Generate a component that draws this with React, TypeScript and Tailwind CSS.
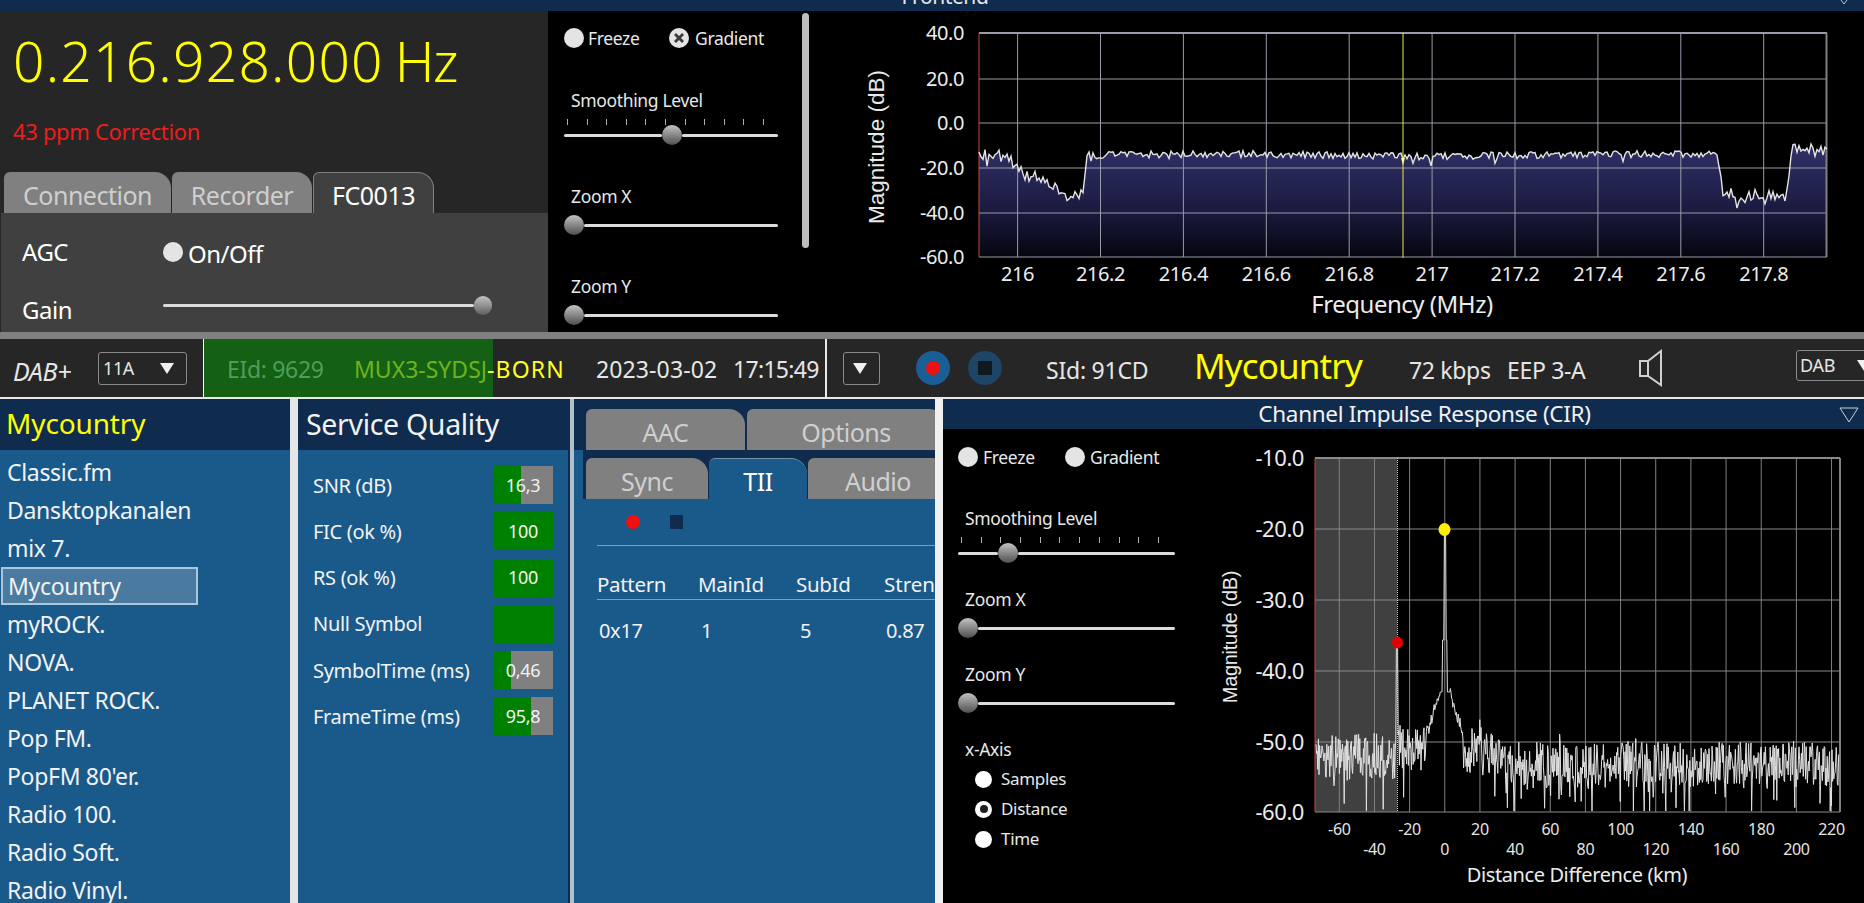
const stations = [
  "Classic.fm",
  "Dansktopkanalen",
  "mix 7.",
  "Mycountry",
  "myROCK.",
  "NOVA.",
  "PLANET ROCK.",
  "Pop FM.",
  "PopFM 80'er.",
  "Radio 100.",
  "Radio Soft.",
  "Radio Vinyl.",
];

const quality = [
  { label: "SNR (dB)", value: "16,3", fill: 47 },
  { label: "FIC (ok %)", value: "100", fill: 100 },
  { label: "RS (ok %)", value: "100", fill: 100 },
  { label: "Null Symbol", value: "", fill: 100 },
  { label: "SymbolTime (ms)", value: "0,46", fill: 30 },
  { label: "FrameTime (ms)", value: "95,8", fill: 64 },
];

function makeRandom(seed: number) {
  let s = seed;
  return () => {
    s = (s * 1664525 + 1013904223) % 4294967296;
    return s / 4294967296;
  };
}

function spectrumBase(x: number) {
  if (x < 1000) return 155;
  if (x < 1072) return 158 + ((x - 1000) / 72) * 38 + Math.sin(x / 6) * 3;
  if (x < 1083) return 198 - ((x - 1072) / 11) * 6;
  if (x < 1087) return 192 - ((x - 1083) / 4) * 38;
  if (x < 1718) return 155 + Math.sin(x / 70);
  if (x < 1723) return 160 + ((x - 1718) / 5) * 33;
  if (x < 1786) return 194 + ((x - 1723) / 63) * 3;
  if (x < 1793) return 193 - ((x - 1786) / 7) * 47;
  return 147 + ((x - 1793) / 34) * 5;
}

function spectrumPath() {
  const rnd = makeRandom(7);
  const pts: string[] = [];
  for (let x = 979; x <= 1827; x += 2) {
    const noisy = x < 1083 || (x > 1723 && x < 1786) || x > 1793;
    let y = spectrumBase(x) + (rnd() - 0.5) * (noisy ? 12 : 7);
    if (rnd() > 0.92) y += rnd() * (noisy ? 10 : 7);
    pts.push(`${x} ${y.toFixed(1)}`);
  }
  return pts;
}

function cirPath() {
  const rnd = makeRandom(21);
  const pts: string[] = [];
  for (let x = 1316; x <= 1839; x += 0.6) {
    let base = 765;
    if (x < 1397) base = 756;
    else if (x < 1430) base = 748;
    else if (x < 1480) base = 746 + ((x - 1430) / 50) * 6;
    else if (x < 1530) base = 752 + ((x - 1480) / 50) * 12;
    let y = base + (rnd() - 0.5) * 46;
    if (rnd() > 0.88) y += rnd() * 44;
    if (rnd() > 0.95) y -= rnd() * 16;
    if (x >= 1396 && x <= 1398.2) y = x < 1397.6 ? 642 : 735;
    const d = Math.abs(x - 1444.8);
    if (d < 18) {
      const peak = d < 1 ? 532 : d < 2.5 ? 640 : d < 5 ? 692 : 692 + (d - 5) * 3.4;
      y = Math.min(y, peak + (d > 5 ? (rnd() - 0.5) * 14 : 0));
    }
    pts.push(`${x.toFixed(1)} ${Math.min(y, 811).toFixed(1)}`);
  }
  return pts.join(" L");
}

function Round({ mark }: { mark?: boolean }) {
  return (
    <span className="w-[20px] h-[20px] rounded-full bg-[#e4e4e4] shrink-0 flex items-center justify-center">
      {mark && (
        <svg width="14" height="14" viewBox="0 0 14 14">
          <path d="M3 3 L11 11 M11 3 L3 11" stroke="#3a3a3a" strokeWidth="2.8" />
        </svg>
      )}
    </span>
  );
}

function Thumb() {
  return <span className="w-[20px] h-[20px] rounded-full shrink-0 bg-linear-to-b from-[#c4c4c4] to-[#505050]" />;
}

function Slider({ before, after }: { before: number; after: number }) {
  return (
    <div className="flex items-center h-[20px]">
      {before > 0 && <span className="h-[3px] bg-[#dcdcdc] rounded-full" style={{ width: before }} />}
      <Thumb />
      <span className="h-[3px] bg-[#dcdcdc] rounded-full" style={{ width: after }} />
    </div>
  );
}

function Ticks({ width }: { width: number }) {
  return (
    <div className="flex justify-between h-[6px] ml-[3px]" style={{ width }}>
      {Array.from({ length: 11 }).map((_, i) => (
        <span key={i} className="w-[1px] h-full bg-[#b0b0b0]" />
      ))}
    </div>
  );
}

function Tab({ label, active, width, dark }: { label: string; active?: boolean; width: number; dark?: boolean }) {
  let cls =
    "h-full shrink-0 pt-[6px] rounded-tl-[6px] rounded-tr-[16px] flex items-center justify-center text-[25px] tracking-[-0.02em] ";
  if (active) {
    cls += dark
      ? "bg-[#1a5a8a] border-t border-[#6f93ae] text-white"
      : "bg-[#404040] border-t border-x border-[#808080] text-white";
  } else {
    cls += "bg-[#808080] text-[#cfcfcf]";
  }
  return (
    <div className={cls} style={{ width }}>
      {label}
    </div>
  );
}

function SpectrumChart() {
  const pts = spectrumPath();
  const line = "M" + pts.join(" L");
  const area = line + " L1827 257 L979 257 Z";
  const xs = ["216", "216.2", "216.4", "216.6", "216.8", "217", "217.2", "217.4", "217.6", "217.8"];
  const ys = ["40.0", "20.0", "0.0", "-20.0", "-40.0", "-60.0"];
  const yPos = [33, 79, 123, 168, 213, 257];
  return (
    <svg width="1049" height="321" viewBox="815 11 1049 321" className="block shrink-0">
      <defs>
        <linearGradient id="specFill" x1="0" y1="143" x2="0" y2="257" gradientUnits="userSpaceOnUse">
          <stop offset="0" stopColor="#31316a" />
          <stop offset="0.6" stopColor="#1a1a3e" />
          <stop offset="1" stopColor="#050510" />
        </linearGradient>
      </defs>
      <path d={area} fill="url(#specFill)" />
      {xs.map((_, i) => (
        <line key={i} x1={1017.6 + i * 82.9} x2={1017.6 + i * 82.9} y1="33" y2="257" stroke="#9a9aa8" />
      ))}
      {yPos.map((y) => (
        <line key={y} x1="979" x2="1827" y1={y} y2={y} stroke="#9a9aa8" strokeWidth={y === 33 ? 2 : 1} />
      ))}
      <line x1="1826.5" x2="1826.5" y1="33" y2="257" stroke="#808080" strokeWidth="2" />
      <line x1="979" x2="979" y1="33" y2="257" stroke="#c24a40" />
      <path d={line} fill="none" stroke="#e4e4e4" strokeWidth="1.4" />
      <line x1="1403" x2="1403" y1="33" y2="258" stroke="#e8e850" />
      <path d="M1401 158 L1405 158 L1403 165 Z" fill="#ffff80" />
      {ys.map((t, i) => (
        <text key={t} x="964" y={yPos[i] + 7} textAnchor="end" className="fill-[#ececec] text-[20px] tracking-[-0.02em]">
          {t}
        </text>
      ))}
      {xs.map((t, i) => (
        <text key={t} x={1017.6 + i * 82.9} y="281" textAnchor="middle" className="fill-[#ececec] text-[20px] tracking-[-0.02em]">
          {t}
        </text>
      ))}
      <text x="1402" y="313" textAnchor="middle" className="fill-[#ececec] text-[24px] tracking-[-0.02em]">
        Frequency (MHz)
      </text>
      <text
        transform="translate(884 147) rotate(-90)"
        textAnchor="middle"
        className="fill-[#e8e8e8] text-[22.5px] font-['Liberation_Sans']"
      >
        Magnitude (dB)
      </text>
    </svg>
  );
}

function CirChart() {
  const xLabels = [-60, -40, -20, 0, 20, 40, 60, 80, 100, 120, 140, 160, 180, 200, 220];
  const ys = ["-10.0", "-20.0", "-30.0", "-40.0", "-50.0", "-60.0"];
  const yPos = [458, 529, 600, 671, 742, 812];
  const xAt = (i: number) => 1339.3 + i * 35.16;
  return (
    <svg width="674" height="474" viewBox="1190 429 674 474" className="block shrink-0">
      <rect x="1315" y="458" width="82" height="354" fill="#404040" />
      {xLabels.map((_, i) => (
        <line key={i} x1={xAt(i)} x2={xAt(i)} y1="458" y2="812" stroke="#808080" />
      ))}
      {yPos.map((y) => (
        <line key={y} x1="1315" x2="1840" y1={y} y2={y} stroke="#8a8a8a" strokeWidth={y === 458 ? 2 : 1} />
      ))}
      <line x1="1840" x2="1840" y1="458" y2="812" stroke="#808080" strokeWidth="2" />
      <line x1="1315" x2="1315" y1="458" y2="812" stroke="#c24a40" />
      <path d={"M" + cirPath()} fill="none" stroke="#e0e0e0" strokeWidth="1" />
      <line x1="1397.5" x2="1397.5" y1="458" y2="812" stroke="#e8e850" strokeDasharray="1 1" />
      <ellipse cx="1444.5" cy="529.5" rx="6" ry="6.5" fill="#ffee00" />
      <ellipse cx="1397.5" cy="642.5" rx="5.5" ry="6" fill="#e00000" />
      {ys.map((t, i) => (
        <text key={t} x="1304" y={yPos[i] + 8} textAnchor="end" className="fill-[#ececec] text-[22px] tracking-[-0.02em]">
          {t}
        </text>
      ))}
      {xLabels.map((t, i) => (
        <text
          key={t}
          x={xAt(i)}
          y={i % 2 === 0 ? 835 : 855}
          textAnchor="middle"
          className="fill-[#e4e4e4] text-[16px] tracking-[-0.02em]"
        >
          {t}
        </text>
      ))}
      <text x="1577" y="882" textAnchor="middle" className="fill-[#ececec] text-[20px] tracking-[-0.02em]">
        Distance Difference (km)
      </text>
      <text
        transform="translate(1237 637) rotate(-90)"
        textAnchor="middle"
        className="fill-[#e8e8e8] text-[20px] font-['Liberation_Sans']"
      >
        Magnitude (dB)
      </text>
    </svg>
  );
}

function SmallCombo({ label, width }: { label?: string; width: number }) {
  return (
    <div
      className="h-[33px] shrink-0 border border-[#8a8a8a] rounded-[3px] flex items-center justify-between pl-[4px] pr-[12px] text-[18px] text-[#e4e4e4] tracking-[-0.02em]"
      style={{ width }}
    >
      <span>{label}</span>
      <svg width="14" height="11" viewBox="0 0 14 11" className="shrink-0">
        <path d="M0 0 H14 L7 11 Z" fill="#f0f0f0" />
      </svg>
    </div>
  );
}

export default function App() {
  return (
    <div className="w-[1864px] h-[903px] overflow-hidden bg-black flex flex-col text-white font-['Noto_Sans',sans-serif]">
      <div className="h-[11px] shrink-0 bg-[#0f2b4d] overflow-hidden relative flex justify-center pl-[26px]">
        <span className="text-[21px] leading-[20px] -mt-[14px] text-[#e8e8e8] tracking-[-0.02em]">Frontend</span>
        <svg width="12" height="4" viewBox="0 0 12 4" className="absolute right-[12px] top-0">
          <path d="M1 0 L4 4 L7 0" fill="none" stroke="#b8c4d0" />
        </svg>
      </div>

      <div className="h-[321px] shrink-0 flex">
        <div className="w-[548px] shrink-0 bg-[#262626] flex flex-col">
          <div className="h-[101px] flex items-center pl-[13px] text-[yellow] text-[55px] font-light">
            <span className="tracking-[0.023em]">0.216.928.000</span>
            <span className="ml-[11px] tracking-[-0.03em]">Hz</span>
          </div>
          <div className="h-[38px] flex items-center pl-[13px] text-[22px] text-[#ee1c1c] tracking-[-0.015em]">
            43 ppm Correction
          </div>
          <div className="h-[41px] mt-[22px] flex gap-[1px] pl-[4px] shrink-0">
            <Tab label="Connection" width={167} />
            <Tab label="Recorder" width={140} />
            <Tab label="FC0013" width={121} active />
          </div>
          <div className="h-[119px] bg-[#404040] ml-[1px] pt-[19px] flex flex-col gap-[18px] text-[24px] tracking-[-0.02em]">
            <div className="h-[40px] flex items-center">
              <span className="w-[162px] pl-[21px]">AGC</span>
              <Round />
              <span className="ml-[5px] mt-[3px]">On/Off</span>
            </div>
            <div className="h-[40px] flex items-center">
              <span className="w-[162px] pl-[21px]">Gain</span>
              <span className="h-[3px] w-[311px] bg-[#dcdcdc] rounded-full -mt-[10px]" />
              <span className="w-[18px] h-[19px] -mt-[10px] rounded-full bg-linear-to-b from-[#c4c4c4] to-[#606060]" />
            </div>
          </div>
        </div>

        <div className="w-[267px] shrink-0 flex text-[17.5px] tracking-[-0.02em] text-[#e8e8e8]">
          <div className="w-[254px] pl-[16px] shrink-0">
            <div className="mt-[17px] h-[20px] flex items-center">
              <Round />
              <span className="ml-[4px] w-[81px]">Freeze</span>
              <Round mark />
              <span className="ml-[6px]">Gradient</span>
            </div>
            <div className="mt-[42px] h-[20px] leading-[20px] pl-[7px]">Smoothing Level</div>
            <div className="mt-[9px]">
              <Ticks width={197} />
            </div>
            <Slider before={98} after={96} />
            <div className="mt-[41px] h-[20px] leading-[20px] pl-[7px]">Zoom X</div>
            <div className="mt-[9px]">
              <Slider before={0} after={194} />
            </div>
            <div className="mt-[41px] h-[20px] leading-[20px] pl-[7px]">Zoom Y</div>
            <div className="mt-[9px]">
              <Slider before={0} after={194} />
            </div>
          </div>
          <div className="w-[7px] h-[235px] mt-[2px] rounded-full bg-[#bdbdbd]" />
        </div>

        <SpectrumChart />
      </div>

      <div className="h-[7px] shrink-0 bg-[#808080]" />

      <div className="h-[58px] shrink-0 bg-[#262626] flex items-center text-[#e6e6e6] tracking-[-0.02em]">
        <span className="w-[98px] shrink-0 pl-[13px] italic text-[25px] mt-[8px]">DAB+</span>
        <SmallCombo label="11A" width={89} />
        <span className="w-[16px] shrink-0" />
        <div className="relative w-[622px] h-full shrink-0 flex items-center border-l border-white text-[23px] pt-[3px]">
          <div className="absolute left-0 top-0 bottom-0 w-[289px] bg-[#146014]" />
          <span className="relative w-[150px] pl-[23px] text-[#4f9e5a] shrink-0">EId: 9629</span>
          <span className="relative w-[242px] shrink-0 tracking-normal">
            <span className="text-[#6fb31c]">MUX3-SYDSJ</span>
            <span className="text-[#ffff22] tracking-[0.05em]">-BORN</span>
          </span>
          <span className="relative w-[137px] shrink-0 tracking-[0.005em]">2023-03-02</span>
          <span className="relative shrink-0 tracking-[-0.03em]">17:15:49</span>
        </div>
        <span className="w-[2px] h-full bg-[#e8e8e8] shrink-0" />
        <span className="w-[16px] shrink-0" />
        <SmallCombo width={37} />
        <div className="ml-[36px] w-[34px] h-[34px] rounded-full bg-[#1a5e96] flex items-center justify-center shrink-0">
          <span className="w-[14px] h-[14px] rounded-full bg-[#f01010]" />
        </div>
        <div className="ml-[18px] w-[34px] h-[34px] rounded-full bg-[#1e4466] flex items-center justify-center shrink-0">
          <span className="w-[14px] h-[14px] bg-[#101820]" />
        </div>
        <span className="ml-[44px] w-[148px] shrink-0 text-[23px] mt-[4px] tracking-[-0.01em]">SId: 91CD</span>
        <span className="w-[215px] shrink-0 text-[35px] text-[yellow] tracking-[-0.025em] -mt-[3px]">Mycountry</span>
        <span className="w-[98px] shrink-0 text-[23px] mt-[4px]">72 kbps</span>
        <span className="w-[132px] shrink-0 text-[23px] mt-[4px]">EEP 3-A</span>
        <svg width="24" height="38" viewBox="0 0 24 38" className="shrink-0">
          <path d="M1 12 H9 L22 2 V36 L9 27 H1 Z M9 12 V27" fill="none" stroke="#cfcfcf" strokeWidth="2" />
        </svg>
        <div className="ml-[133px] w-[80px] h-[31px] shrink-0 border border-[#8a8a8a] rounded-[3px] flex items-center pl-[3px] text-[18px] -mt-[5px]">
          <span className="w-[57px] shrink-0">DAB</span>
          <svg width="14" height="11" viewBox="0 0 14 11" className="shrink-0">
            <path d="M0 0 H14 L7 11 Z" fill="#f0f0f0" />
          </svg>
        </div>
      </div>

      <div className="h-[2px] shrink-0 bg-[#e8e8e8]" />

      <div className="flex-1 flex min-h-0 text-[#f2f2f2] tracking-[-0.02em]">
        <div className="w-[290px] shrink-0 bg-[#1a5a8a] flex flex-col">
          <div className="h-[51px] shrink-0 bg-[#0f2b4d] flex items-center pl-[6px] pb-[3px] text-[28px] tracking-[-0.005em] text-[yellow]">
            Mycountry
          </div>
          <div className="pt-[3px] flex flex-col">
            {stations.map((s) =>
              s === "Mycountry" ? (
                <div
                  key={s}
                  className="h-[38px] w-[197px] ml-[1px] shrink-0 flex items-center pl-[5px] text-[23px] bg-[#4a7a9f] border-2 border-[#a9c6da]"
                >
                  {s}
                </div>
              ) : (
                <div key={s} className="h-[38px] shrink-0 flex items-center pl-[7px] text-[23px]">
                  {s}
                </div>
              )
            )}
          </div>
        </div>

        <div className="w-[8px] shrink-0 bg-[#e6e6e6]" />

        <div className="w-[272px] shrink-0 bg-[#1a5a8a] border-r-2 border-[#0f2b4d] flex flex-col">
          <div className="h-[51px] shrink-0 bg-[#0f2b4d] flex items-center pl-[8px] pb-[1px] text-[28.5px]">
            Service Quality
          </div>
          <div className="pt-[16px] flex flex-col gap-[8.3px]">
            {quality.map((q) => (
              <div key={q.label} className="h-[38px] flex items-center text-[20px]">
                <span className="w-[195px] pl-[15px] pt-[1px] shrink-0">{q.label}</span>
                <div className="relative w-[60px] h-full bg-[#808080] flex items-center justify-center text-[18px]">
                  <span className="absolute left-0 top-0 bottom-0 bg-[#008000]" style={{ width: `${q.fill}%` }} />
                  <span className="relative">{q.value}</span>
                </div>
              </div>
            ))}
          </div>
        </div>

        <div className="w-[4px] shrink-0 bg-[#b4bfcc]" />

        <div className="w-[361px] shrink-0 bg-[#1a5a8a] flex flex-col overflow-hidden">
          <div className="h-[51px] shrink-0 bg-[#0f2b4d] flex flex-col justify-end pl-[12px]">
            <div className="h-[41px] flex gap-[2px]">
              <Tab label="AAC" width={159} />
              <Tab label="Options" width={198} />
            </div>
          </div>
          <div className="h-[49px] shrink-0 flex flex-col ml-[9px] bg-[#0f2b4d] pl-[3px] pt-[8px]">
            <div className="h-[41px] flex gap-[1px]">
              <Tab label="Sync" width={122} />
              <Tab label="TII" width={98} active dark />
              <Tab label="Audio" width={140} />
            </div>
          </div>
          <div className="flex items-center h-[46px] pl-[52px] shrink-0">
            <span className="w-[14px] h-[14px] rounded-full bg-[#f01010]" />
            <span className="ml-[30px] w-[13px] h-[14px] bg-[#0f2b4d]" />
          </div>
          <div className="h-[1px] ml-[23px] bg-[#7c9fba] shrink-0" />
          <div className="grid grid-cols-[101px_98px_88px_100px] pl-[23px] mt-[23px] text-[20.5px] h-[30px] items-center whitespace-nowrap shrink-0">
            <span>Pattern</span>
            <span>MainId</span>
            <span>SubId</span>
            <span className="tracking-normal">Strength</span>
          </div>
          <div className="h-[1px] ml-[23px] bg-[#7c9fba] shrink-0" />
          <div className="grid grid-cols-[101px_98px_88px_100px] pl-[25px] mt-[16px] text-[20px] h-[30px] items-center shrink-0">
            <span>0x17</span>
            <span className="pl-[1px]">1</span>
            <span className="pl-[2px]">5</span>
            <span>0.87</span>
          </div>
        </div>

        <div className="w-[8px] shrink-0 bg-[#f0f0f0]" />

        <div className="w-[921px] shrink-0 flex flex-col">
          <div className="h-[30px] shrink-0 bg-[#0f2b4d] relative flex items-center justify-center pl-[42px] text-[22.5px]">
            Channel Impulse Response (CIR)
            <svg width="20" height="16" viewBox="0 0 20 16" className="absolute right-[5px] top-[8px]">
              <path d="M1 1 H19 L10 15 Z" fill="none" stroke="#c8d2dc" />
            </svg>
          </div>
          <div className="flex-1 flex min-h-0">
            <div className="w-[247px] shrink-0 pl-[15px] text-[17.5px] text-[#e8e8e8]">
              <div className="mt-[18px] h-[20px] flex items-center">
                <Round />
                <span className="ml-[5px] w-[82px]">Freeze</span>
                <Round />
                <span className="ml-[5px]">Gradient</span>
              </div>
              <div className="mt-[41px] h-[20px] leading-[20px] pl-[7px]">Smoothing Level</div>
              <div className="mt-[9px]">
                <Ticks width={198} />
              </div>
              <Slider before={40} after={157} />
              <div className="mt-[26px] h-[20px] leading-[20px] pl-[7px]">Zoom X</div>
              <div className="mt-[9px]">
                <Slider before={0} after={197} />
              </div>
              <div className="mt-[26px] h-[20px] leading-[20px] pl-[7px]">Zoom Y</div>
              <div className="mt-[9px]">
                <Slider before={0} after={197} />
              </div>
              <div className="mt-[26px] h-[20px] leading-[20px] pl-[7px]">x-Axis</div>
              <div className="mt-[10px] pl-[17px] flex flex-col gap-[10px] text-[17px]">
                <div className="h-[20px] flex items-center">
                  <span className="w-[17px] h-[17px] rounded-full bg-white shrink-0" />
                  <span className="ml-[9px]">Samples</span>
                </div>
                <div className="h-[20px] flex items-center">
                  <span className="w-[17px] h-[17px] rounded-full bg-white shrink-0 flex items-center justify-center">
                    <span className="w-[8px] h-[8px] rounded-full bg-[#202020]" />
                  </span>
                  <span className="ml-[9px]">Distance</span>
                </div>
                <div className="h-[20px] flex items-center">
                  <span className="w-[17px] h-[17px] rounded-full bg-white shrink-0" />
                  <span className="ml-[9px]">Time</span>
                </div>
              </div>
            </div>
            <CirChart />
          </div>
        </div>
      </div>
    </div>
  );
}
